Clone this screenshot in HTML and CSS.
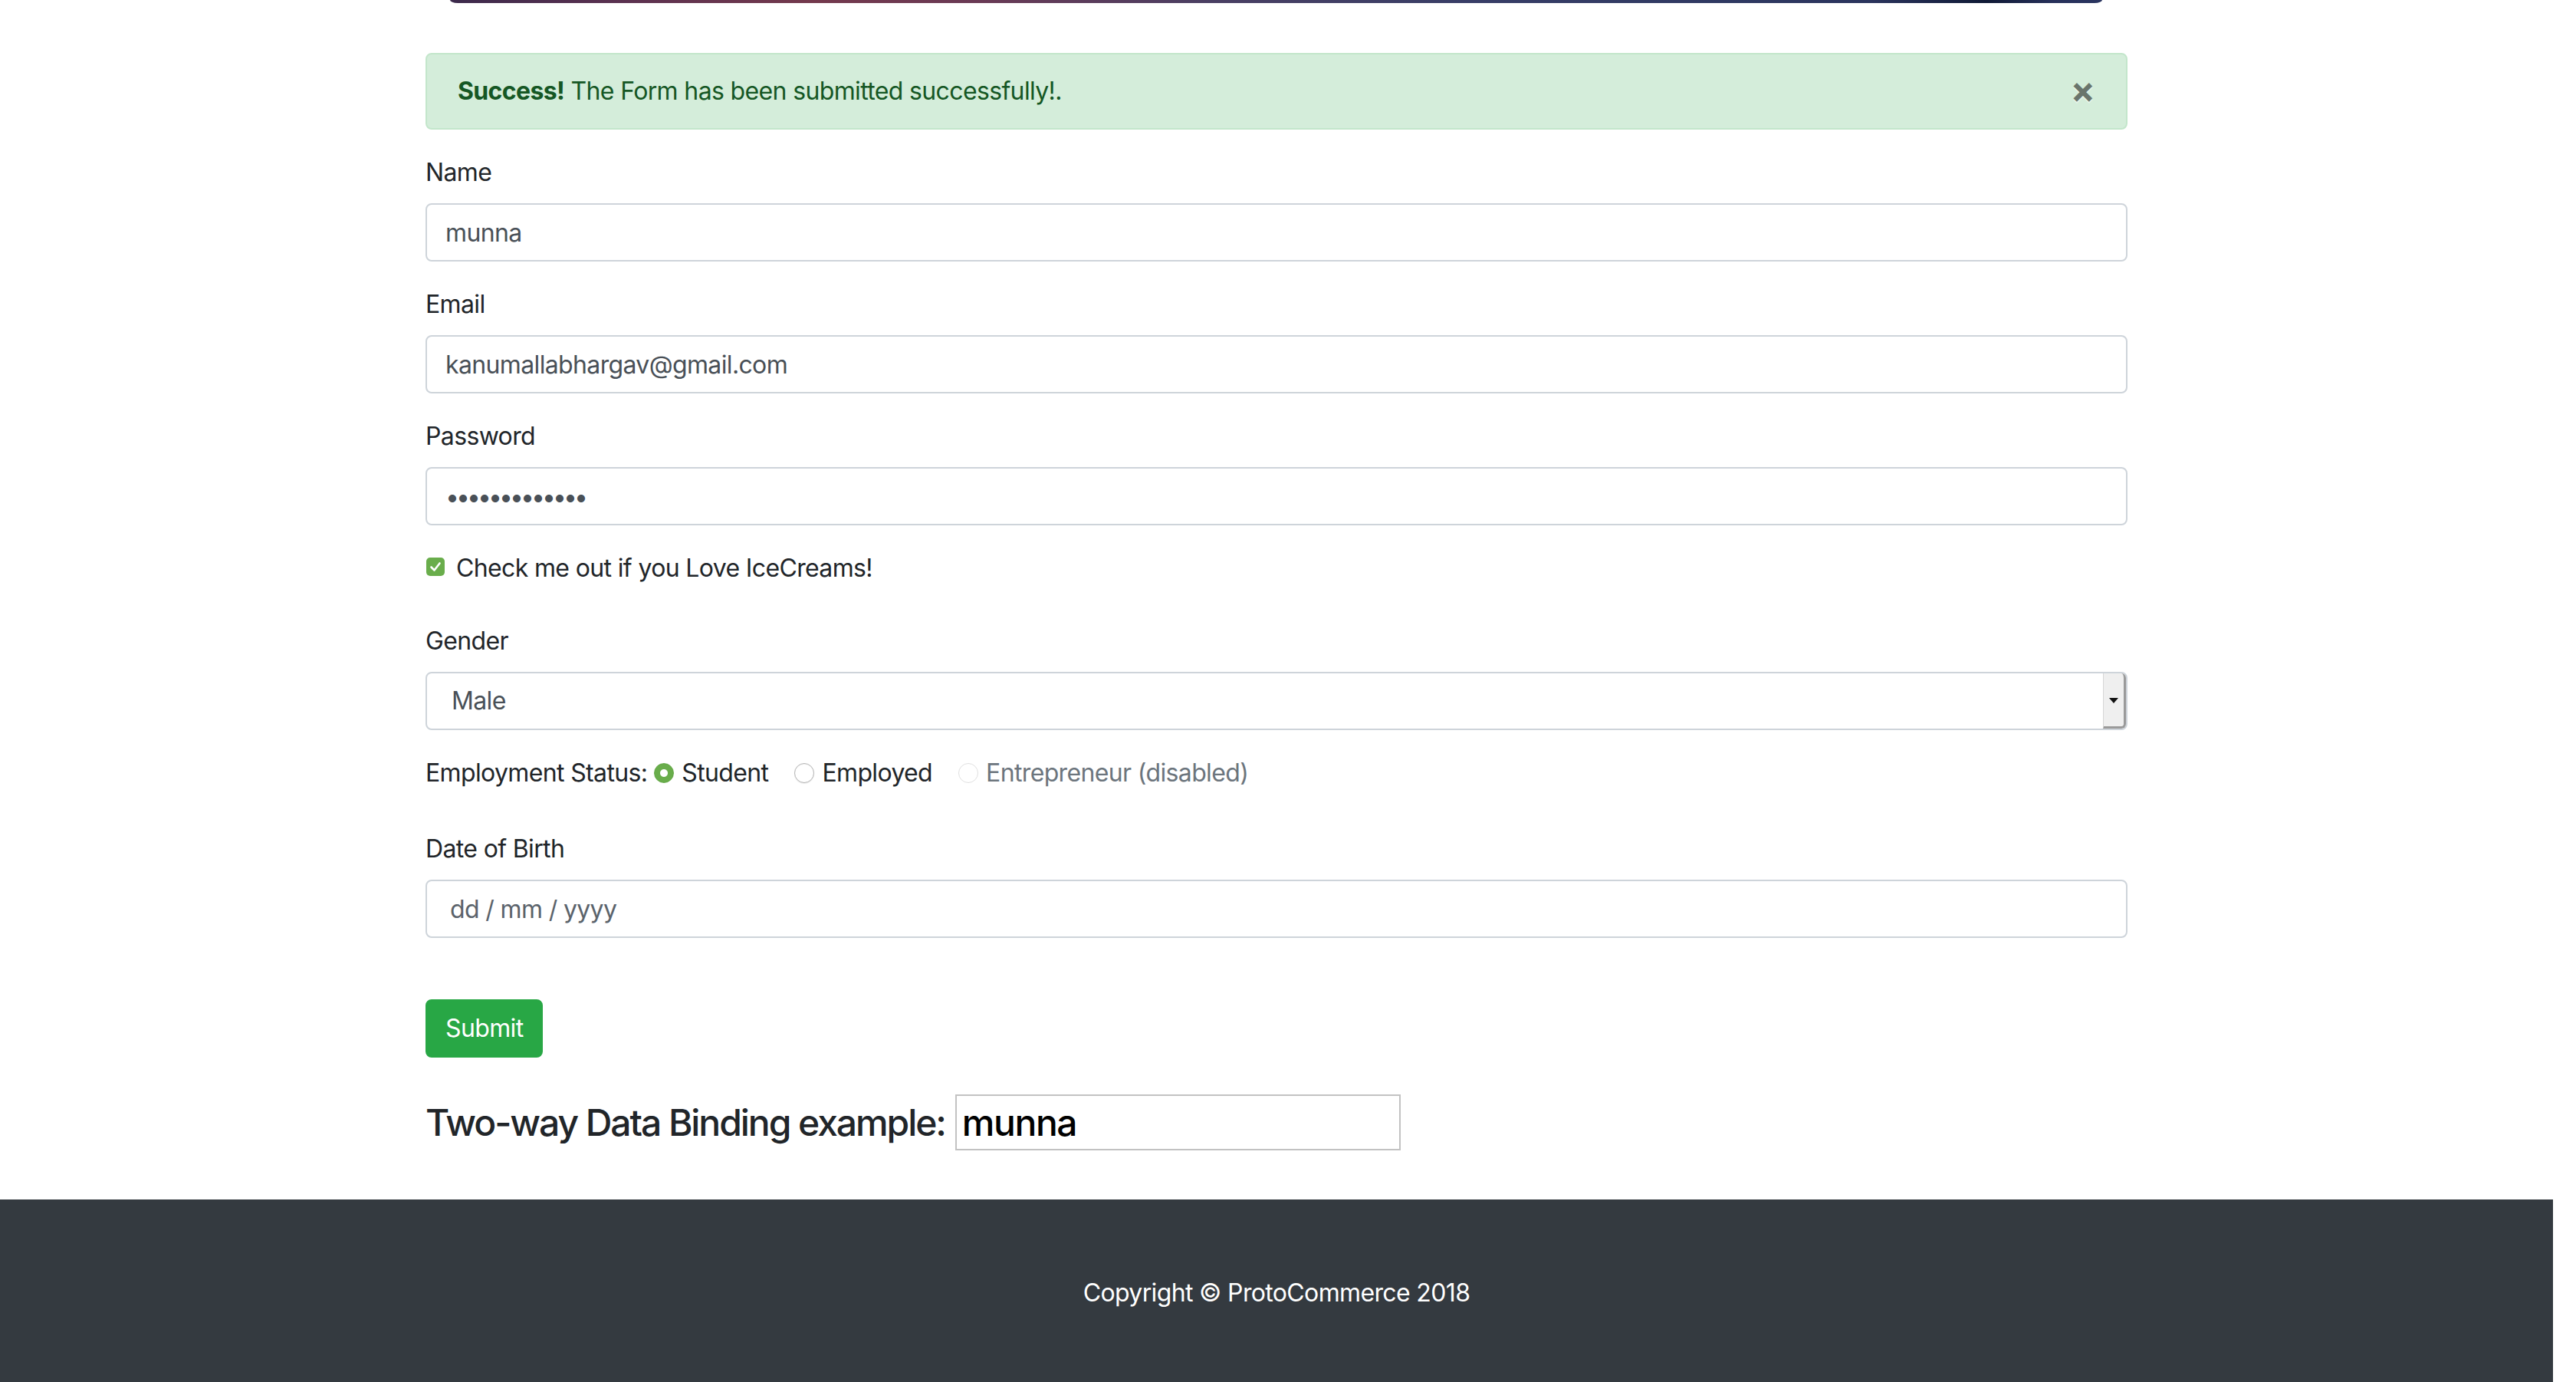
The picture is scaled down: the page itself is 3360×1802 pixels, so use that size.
FILE: index.html
```html
<!DOCTYPE html>
<html lang="en">
<head>
<meta charset="utf-8">
<title>ProtoCommerce</title>
<link rel="stylesheet" href="styles.css">
</head>
<body>
<div class="page">
  <div class="container">
    <div class="hero-edge"></div>

    <div class="alert">
      <strong>Success!</strong> The Form has been submitted successfully!.
      <button class="alert-close" type="button" aria-label="Close">×</button>
    </div>

    <form class="form">
      <div class="form-group">
        <label class="form-label" for="name">Name</label>
        <input class="form-control" id="name" type="text" value="munna">
      </div>
      <div class="form-group">
        <label class="form-label" for="email">Email</label>
        <input class="form-control" id="email" type="text" value="kanumallabhargav@gmail.com">
      </div>
      <div class="form-group">
        <label class="form-label" for="pwd">Password</label>
        <input class="form-control pwd-control" id="pwd" type="password" value="abcdefghijklm">
      </div>
      <div class="form-check">
        <span class="check-box">
          <svg viewBox="0 0 24 24" width="24" height="24"><path d="M6.5 12.5 L10.5 16.5 L17.5 7.5" fill="none" stroke="#fff" stroke-width="2.6" stroke-linecap="round" stroke-linejoin="round"/></svg>
        </span>
        <label class="check-label">Check me out if you Love IceCreams!</label>
      </div>

      <div class="form-group gender-group">
        <label class="form-label" for="gender">Gender</label>
        <div class="select-wrap">
          <select class="form-control form-select" id="gender">
            <option>Male</option>
            <option>Female</option>
          </select>
          <span class="select-btn"><span class="select-arrow"></span></span>
        </div>
      </div>

      <div class="emp-row">
        <span class="emp-title">Employment Status:</span>
        <label class="inline-check"><input class="radio" type="radio" name="emp" checked><span>Student</span></label>
        <label class="inline-check"><input class="radio" type="radio" name="emp"><span>Employed</span></label>
        <label class="inline-check disabled"><input class="radio" type="radio" name="emp" disabled><span>Entrepreneur (disabled)</span></label>
      </div>

      <div class="form-group dob-group">
        <label class="form-label" for="dob">Date of Birth</label>
        <input class="form-control date-control" id="dob" type="text" value="dd / mm / yyyy">
      </div>

      <button class="btn-submit" type="button">Submit</button>
    </form>

    <div class="binding-row">
      <h4 class="binding-title">Two-way Data Binding example:</h4>
      <input class="binding-input" type="text" value="munna">
    </div>
  </div>

  <footer class="footer">
    <p class="footer-text">Copyright © ProtoCommerce 2018</p>
  </footer>
</div>
</body>
</html>
```

FILE: styles.css
```css
* { box-sizing: border-box; }

html, body {
  margin: 0;
  padding: 0;
  background: #fff;
}

body {
  font-family: Inter, "Noto Sans", "Liberation Sans", sans-serif;
  font-size: 32px;
  line-height: 48px;
  letter-spacing: -0.02em;
  color: #212529;
  overflow: hidden;
}

.page {
  width: 3330px;
}

.container {
  width: 2280px;
  padding: 0 30px;
  margin: 0 auto;
}

.hero-edge {
  height: 4px;
  margin: 0 33px 65px 32px;
  border-radius: 0 0 10px 10px / 0 0 4px 4px;
  background: linear-gradient(90deg,
    #3c2a4c 0%,
    #5a3150 10%,
    #74394d 22%,
    #6a3a55 32%,
    #4a3f63 46%,
    #383e67 62%,
    #2f3962 78%,
    #2b345d 86%,
    #101a36 93%,
    #27305a 97%,
    #2a3560 100%);
}

/* Alert */
.alert {
  position: relative;
  padding: 24px 100px 24px 40px;
  margin-bottom: 32px;
  border: 2px solid #c3e6cb;
  border-radius: 8px;
  background: #d4edda;
  color: #155724;
}

.alert strong { font-weight: 700; }

.alert-close {
  position: absolute;
  top: 0;
  right: 0;
  padding: 22px 40px 26px;
  border: 0;
  background: transparent;
  font-family: inherit;
  font-size: 48px;
  font-weight: 700;
  line-height: 48px;
  color: #000;
  opacity: .5;
  text-shadow: 0 2px 0 #fff;
  cursor: pointer;
}

/* Form */
.form-group { margin-bottom: 32px; }

.form-label {
  display: block;
  margin-bottom: 16px;
}

.form-control {
  display: block;
  width: 100%;
  height: 76px;
  padding: 12px 24px;
  font-family: inherit;
  font-size: 32px;
  line-height: 48px;
  letter-spacing: -0.02em;
  color: #495057;
  background: #fff;
  border: 2px solid #ced4da;
  border-radius: 8px;
  outline: none;
}

.pwd-control {
  letter-spacing: -4px;
}

.form-check {
  position: relative;
  display: flex;
  align-items: center;
  height: 48px;
  padding-left: 40px;
  margin-bottom: 47px;
}

.check-box {
  position: absolute;
  left: 1px;
  top: 10px;
  width: 24px;
  height: 24px;
  border-radius: 5px;
  background: #69ad4b;
  display: flex;
}

.check-box svg { display: block; }

/* Select */
.select-wrap { position: relative; }

.form-select {
  appearance: none;
  -webkit-appearance: none;
  padding-left: 32px;
}

.select-btn {
  position: absolute;
  top: 2px;
  right: 2px;
  bottom: 2px;
  width: 30px;
  background: #efefef;
  border-left: 1px solid #d6d6d6;
  border-right: 3px solid #9a9a9a;
  border-bottom: 3px solid #9a9a9a;
  border-radius: 0 6px 6px 0;
  display: flex;
  align-items: center;
  justify-content: center;
}

.select-arrow {
  width: 0;
  height: 0;
  border-left: 6px solid transparent;
  border-right: 6px solid transparent;
  border-top: 7px solid #111;
  margin-top: 2px;
}

/* Employment status */
.emp-row {
  display: flex;
  align-items: center;
  height: 48px;
  margin-bottom: 51px;
}

.emp-title { margin-right: 9px; }

.inline-check {
  display: flex;
  align-items: center;
  margin-right: 34px;
}

.radio {
  appearance: none;
  -webkit-appearance: none;
  width: 26px;
  height: 26px;
  margin: 0 10px 0 0;
  border-radius: 50%;
  border: 1.5px solid #b5b5b5;
  background: #fff;
  box-shadow: inset 0 1px 1px rgba(0,0,0,.05), 0 1px 1px rgba(0,0,0,.08);
}

.radio:checked {
  border-color: #62a745;
  background: radial-gradient(circle, #fff 0 4.5px, #69ad4b 5.5px);
  box-shadow: none;
}

.radio:disabled {
  border-color: #e0e0e0;
  box-shadow: none;
}

.inline-check.disabled { color: #6c757d; }

/* Date */
.dob-group { margin-bottom: 80px; }

.date-control {
  padding-left: 30px;
  color: #5b636b;
}

/* Submit */
.btn-submit {
  display: block;
  height: 76px;
  padding: 12px 24px;
  margin-bottom: 48px;
  font-family: inherit;
  font-size: 32px;
  line-height: 48px;
  letter-spacing: -0.02em;
  color: #fff;
  background: #28a745;
  border: 2px solid #28a745;
  border-radius: 8px;
  cursor: pointer;
}

/* Binding row */
.binding-row {
  display: flex;
  align-items: center;
  margin-bottom: 64px;
}

.binding-title {
  margin: 0 13px 0 0;
  font-size: 48px;
  font-weight: 500;
  line-height: 58px;
  letter-spacing: -0.043em;
}

.binding-input {
  width: 581px;
  height: 73px;
  padding: 0 7px;
  font-family: inherit;
  font-size: 48px;
  font-weight: 500;
  letter-spacing: -0.03em;
  color: #000;
  border: 2px solid #c2c2c2;
  border-radius: 0;
  outline: none;
}

/* Footer */
.footer {
  background: #343a40;
  color: #fff;
  padding: 98px 0 200px;
  text-align: center;
}

.footer-text { margin: 0; }
```
